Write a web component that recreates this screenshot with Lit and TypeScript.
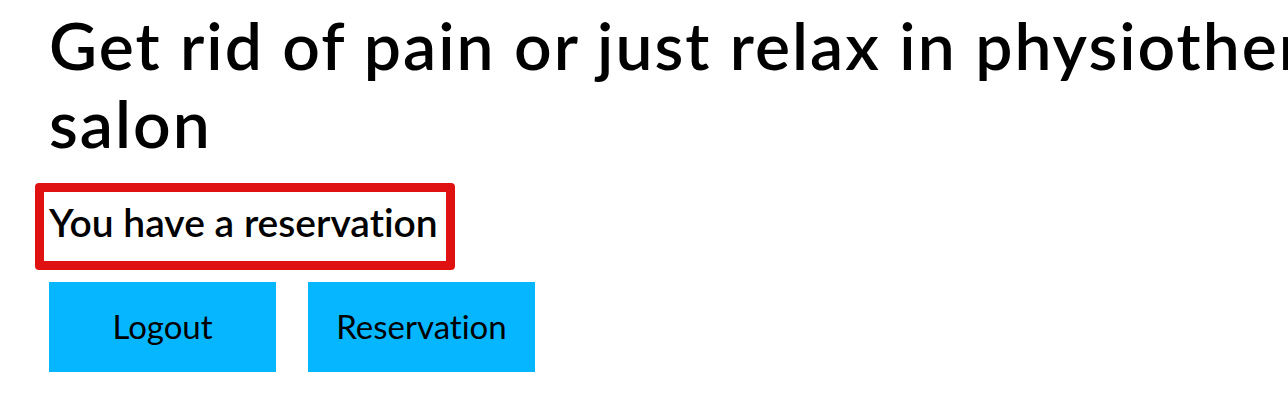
import { LitElement, html, css } from "lit";
import { customElement } from "lit/decorators.js";

@customElement("app-root")
export class AppRoot extends LitElement {
  static styles = css`
    :host {
      display: block;
      overflow: hidden;
      background: #fff;
      color: #000;
      font-family: Lato, sans-serif;
      font-variant-ligatures: no-common-ligatures;
    }
    .hero {
      padding: 6px 0 39px 49px;
    }
    .title {
      margin: 0;
      font-size: 66px;
      line-height: 78px;
      font-weight: 600;
      letter-spacing: 2px;
      white-space: nowrap;
    }
    .status {
      display: inline-block;
      box-sizing: border-box;
      margin: 21px 0 12px -14px;
      padding: 8px 8px 16px 5px;
      border: 9px solid #e01111;
      border-radius: 4px;
      font-size: 39px;
      line-height: 45px;
      font-weight: 600;
    }
    .actions {
      display: flex;
      gap: 32px;
    }
    .action {
      width: 227px;
      height: 90px;
      padding: 0 0 2px;
      border: 0;
      background: #06b6ff;
      color: #000;
      font-family: inherit;
      font-variant-ligatures: inherit;
      font-size: 33px;
    }
  `;

  render() {
    return html`
      <main class="hero">
        <h1 class="title">Get rid of pain or just relax in physiotherapy<br />salon</h1>
        <h2 class="status">You have a reservation</h2>
        <div class="actions">
          <button class="action" type="button">Logout</button>
          <button class="action" type="button">Reservation</button>
        </div>
      </main>
    `;
  }
}
